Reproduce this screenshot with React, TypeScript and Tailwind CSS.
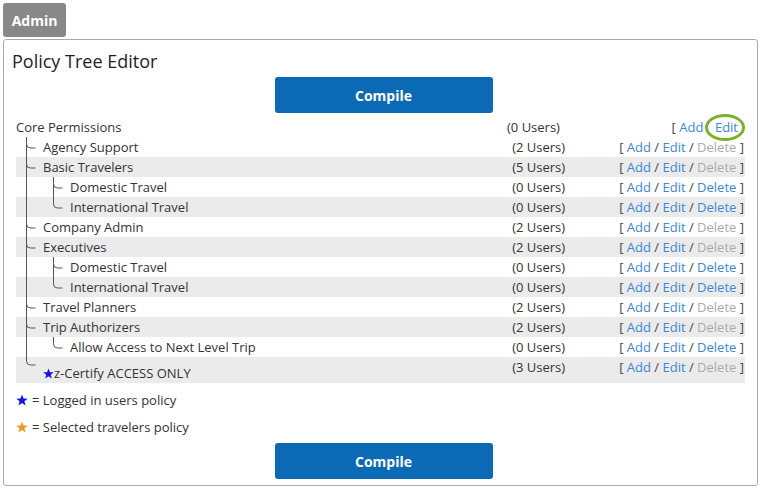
import React from 'react';

interface Node {
  label: string;
  level: 1 | 2;
  users: number;
  canDelete: boolean;
  lastInLevel?: boolean;
  star?: boolean;
}

const nodes: Node[] = [
  { label: 'Agency Support', level: 1, users: 2, canDelete: false },
  { label: 'Basic Travelers', level: 1, users: 5, canDelete: false },
  { label: 'Domestic Travel', level: 2, users: 0, canDelete: true },
  { label: 'International Travel', level: 2, users: 0, canDelete: true, lastInLevel: true },
  { label: 'Company Admin', level: 1, users: 2, canDelete: false },
  { label: 'Executives', level: 1, users: 2, canDelete: false },
  { label: 'Domestic Travel', level: 2, users: 0, canDelete: true },
  { label: 'International Travel', level: 2, users: 0, canDelete: true, lastInLevel: true },
  { label: 'Travel Planners', level: 1, users: 2, canDelete: false },
  { label: 'Trip Authorizers', level: 1, users: 2, canDelete: false },
  { label: 'Allow Access to Next Level Trip', level: 2, users: 0, canDelete: true, lastInLevel: true },
  { label: 'z-Certify ACCESS ONLY', level: 1, users: 3, canDelete: false, lastInLevel: true, star: true },
];

const font = { fontFamily: '"Open Sans", "Liberation Sans", sans-serif' };

function Star({ color, size = 11 }: { color: string; size?: number }) {
  return (
    <svg width={size} height={size} viewBox="0 0 24 24" className="inline-block">
      <polygon
        fill={color}
        points="12,1 15,9 23.5,9.3 16.8,14.6 19.2,23 12,18.2 4.8,23 7.2,14.6 0.5,9.3 9,9"
      />
    </svg>
  );
}

// tree connector lines drawn to the left of each label
function Connector({ level, last, height, branchY }: { level: 1 | 2; last?: boolean; height: number; branchY: number }) {
  const x1 = 10.5;
  const x2 = 37.5;
  const branch = (x: number) => `M${x} ${branchY - 4} Q${x} ${branchY} ${x + 4} ${branchY} L${x + 9} ${branchY}`;
  const width = level === 1 ? 27 : 54;
  return (
    <svg width={width} height={height} className="shrink-0">
      {level === 1 ? (
        <>
          <line x1={x1} y1={0} x2={x1} y2={last ? branchY - 4 : height} stroke="#555" strokeWidth="1" />
          <path d={branch(x1)} stroke="#555" strokeWidth="1" fill="none" />
        </>
      ) : (
        <>
          <line x1={x1} y1={0} x2={x1} y2={height} stroke="#555" strokeWidth="1" />
          <line x1={x2} y1={0} x2={x2} y2={last ? branchY - 4 : height} stroke="#555" strokeWidth="1" />
          <path d={branch(x2)} stroke="#555" strokeWidth="1" fill="none" />
        </>
      )}
    </svg>
  );
}

function Actions({ canDelete }: { canDelete: boolean }) {
  return (
    <span className="text-[#444]">
      [ <span className="text-[#3a87d9]">Add</span> / <span className="text-[#3a87d9]">Edit</span> /{' '}
      <span className={canDelete ? 'text-[#3a87d9]' : 'text-[#aaa]'}>Delete</span> ]
    </span>
  );
}

function TreeRow({ node, striped }: { node: Node; striped: boolean }) {
  const tall = !!node.star;
  const height = tall ? 26 : 20;
  return (
    <div className={`flex items-start ${striped ? 'bg-[#ebebeb]' : ''}`} style={{ height }}>
      <div className="flex flex-1 items-start">
        <Connector level={node.level} last={node.lastInLevel} height={height} branchY={tall ? 8 : 11} />
        <span className={`flex items-center leading-[20px] ${tall ? 'pt-[6px]' : ''}`}>
          {node.star && <Star color="#1010ff" />}
          {node.label}
        </span>
      </div>
      <div className="w-[107px] leading-[20px]">({node.users} Users)</div>
      <div className="pr-[1px] text-right leading-[20px]">
        <Actions canDelete={node.canDelete} />
      </div>
    </div>
  );
}

function CompileButton() {
  return (
    <div className="flex justify-center">
      <button className="ml-[6px] h-[36px] w-[218px] rounded-[3px] bg-[#0b6ab5] text-[14px] font-bold text-white">
        Compile
      </button>
    </div>
  );
}

export default function App() {
  return (
    <div className="bg-white p-[3px] text-[13px] text-[#333]" style={font}>
      <div className="flex h-[34px] w-[63px] items-center justify-center rounded-[3px] bg-[#888] text-[14px] font-bold text-white">
        Admin
      </div>
      <div className="mt-[2px] h-[447px] w-[755px] rounded-[3px] border border-[#aaa] px-[8px] pt-[9px]">
        <h2 className="text-[18px] leading-[24px] font-medium text-[#222]">Policy Tree Editor</h2>
        <div className="mt-[4px]">
          <CompileButton />
        </div>
        <div className="mt-[4px] ml-[4px] w-[729px]">
          <div className="flex h-[20px] items-start leading-[20px]">
            <div className="flex-1">Core Permissions</div>
            <div className="w-[113px]">(0 Users)</div>
            <div className="relative w-[125px] pr-[7px] text-right">
              <span className="text-[#444]">[</span> <span className="text-[#3a87d9]">Add</span>{' '}
              <span className="invisible">/</span> <span className="text-[#3a87d9]">Edit</span>
              <span className="absolute right-[0px] top-[-3px] h-[27px] w-[40px] rounded-[50%] border-[3px] border-[#7ab32b]" />
            </div>
          </div>
          {nodes.map((n, i) => (
            <TreeRow key={i} node={n} striped={i % 2 === 1} />
          ))}
          <div className="mt-[7px] flex items-center gap-[4px] leading-[20px]">
            <Star color="#1010ff" size={12} />
            <span>= Logged in users policy</span>
          </div>
          <div className="mt-[7px] flex items-center gap-[4px] leading-[20px]">
            <Star color="#f7941d" size={12} />
            <span>= Selected travelers policy</span>
          </div>
        </div>
        <div className="mt-[6px]">
          <CompileButton />
        </div>
      </div>
    </div>
  );
}
